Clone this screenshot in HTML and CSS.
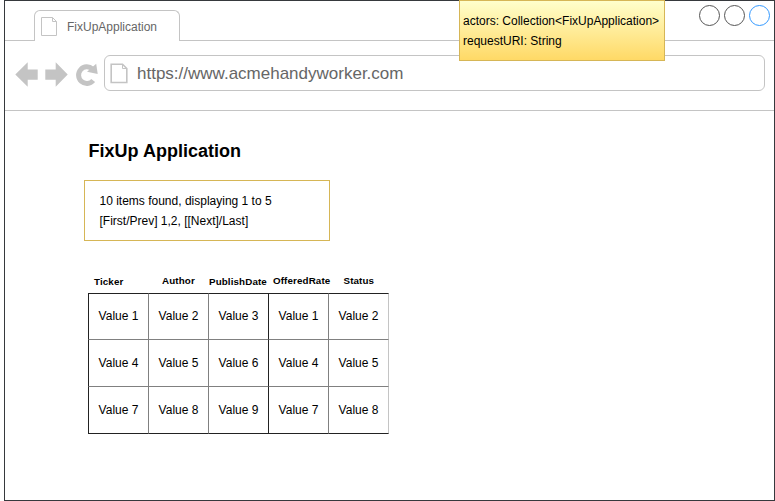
FILE: index.html
```html
<!DOCTYPE html>
<html lang="en">
<head>
<meta charset="utf-8">
<title>FixUpApplication</title>
<link rel="stylesheet" href="styles.css">
</head>
<body>
<div class="window">
  <header class="tabstrip">
    <div class="strip-start"></div>
    <div class="tab">
      <svg class="tab-icon" width="17" height="20" viewBox="0 0 17 20"><path d="M.5.5H11.500L15.500 4.500V18.500H.5ZM11.500.5V4.500H15.500" fill="none" stroke="#c4c4c4"/></svg>
      <span>FixUpApplication</span>
    </div>
    <div class="strip-end">
      <svg width="72" height="22" viewBox="0 0 72 22" fill="none"><circle cx="10.500" cy="11.500" r="10" stroke="#555"/><circle cx="35.500" cy="11.500" r="10" stroke="#555"/><circle cx="60.500" cy="11.500" r="10" stroke="#3399ff"/></svg>
    </div>
  </header>
  <div class="toolbar">
    <svg class="nav" width="84" height="26" viewBox="0 0 84 26"><g fill="#c4c4c4"><path d="M.3 12.500 12.700.2V7.500H22.700V17.700H12.700V24.700Z"/><path d="M52.700 12.500 40.700.2V7.500H30.300V17.700H40.700V24.700Z"/></g><path d="M78.200 18.500A8.300 8.300 0 1 1 77.500 7" fill="none" stroke="#c4c4c4" stroke-width="5"/><path d="M81.200 1.700 82.700 12 72 9.700Z" fill="#c4c4c4"/></svg>
    <div class="address">
      <svg width="18" height="21" viewBox="0 0 18 21"><path d="M1.200 1.200H12.500L16.800 5.500V19.500H1.200Z" fill="none" stroke="#c4c4c4" stroke-width="1.600"/><path d="M12.500 1.200V5.500H16.800" fill="none" stroke="#c4c4c4"/></svg>
      <span>https://www.acmehandyworker.com</span>
    </div>
  </div>
  <main class="page">
    <h1>FixUp Application</h1>
    <div class="pager">10 items found, displaying 1 to 5<br>[First/Prev] 1,2, [[Next]/Last]</div>
    <div class="heads">
      <span class="low ticker">Ticker</span><span class="author">Author</span><span class="low publish">PublishDate</span><span class="offered">OfferedRate</span><span class="status">Status</span>
    </div>
    <div class="values">
      <div>Value 1</div><div>Value 2</div><div>Value 3</div><div>Value 1</div><div>Value 2</div>
      <div>Value 4</div><div>Value 5</div><div>Value 6</div><div>Value 4</div><div>Value 5</div>
      <div>Value 7</div><div>Value 8</div><div>Value 9</div><div>Value 7</div><div>Value 8</div>
    </div>
  </main>
</div>
<aside class="note">actors: Collection&lt;FixUpApplication&gt;<br>requestURI: String</aside>
</body>
</html>
```
FILE: styles.css
```css
* { box-sizing: border-box; }
body {
  margin: 0;
  background: #fff;
  color: #000;
  font: 12px/20px "Liberation Sans", Arial, sans-serif;
  overflow: hidden;
}
svg { display: block; flex: none; }
.window {
  margin-left: 4px;
  width: 771px;
  height: 501px;
  border: 1px solid #36393d;
}
.tabstrip { display: flex; align-items: flex-end; height: 40px; }
.strip-start { width: 29px; border-bottom: 1px solid #c4c4c4; }
.tab {
  display: flex;
  width: 146px;
  height: 31px;
  padding: 6px 0 0 6px;
  border: 1px solid #c4c4c4;
  border-bottom: 0;
  border-radius: 6px 6px 0 0;
  color: #666;
}
.tab span { margin-left: 9px; line-height: 20px; }
.strip-end {
  flex: 1;
  display: flex;
  justify-content: flex-end;
  height: 40px;
  padding: 3px 3px 0 0;
  border-bottom: 1px solid #c4c4c4;
}
.toolbar {
  display: flex;
  height: 70px;
  padding: 14px 9px 0 10px;
  border-bottom: 1px solid #c4c4c4;
}
.nav { margin: 7px 5px 0 0; }
.address {
  display: flex;
  flex: 1;
  height: 36px;
  padding: 7px 0 0 5px;
  border: 1px solid #c4c4c4;
  border-radius: 6px;
  color: #666;
  font-size: 17px;
}
.address span { margin-left: 9px; line-height: 22px; }
.page { padding: 28px 0 0 79px; }
h1 { margin: 0 0 0 4.6px; font-size: 18px; line-height: 24px; }
.pager {
  width: 246px;
  height: 61px;
  margin-top: 17px;
  padding: 10px 14.5px;
  border: 1px solid #d6b656;
}
.heads {
  display: grid;
  grid-template-columns: repeat(5, 60px);
  height: 20px;
  margin: 30px 0 0 4px;
  font-size: 9.8px;
  font-weight: bold;
  letter-spacing: .12px;
  white-space: nowrap;
}
.heads .low { padding-top: 1px; }
.heads .ticker { padding-left: 6px; }
.heads .author { padding-left: 14px; }
.heads .publish { padding-left: 1px; }
.heads .offered { padding-left: 5px; }
.heads .status { padding-left: 15.5px; }
.values {
  display: grid;
  grid-template-columns: repeat(4, 60px) 61px;
  grid-template-rows: 46px 47px 48px;
  margin: 2px 0 0 4px;
}
.values div {
  padding-top: 12px;
  padding-left: 9.6px;
  border-top: 1px solid #808080;
  border-left: 1px solid #808080;
  white-space: nowrap;
}
.values div:nth-child(-n+5) { border-top-color: #222; }
.values div:nth-child(n+6) { padding-top: 13px; }
.values div:nth-child(n+11) { border-bottom: 1px solid #222; }
.values div:nth-child(5n+1), .values div:nth-child(5n+4) { border-left-color: #222; }
.values div:nth-child(5n) { border-right: 1px solid #c4c4c4; }
.note {
  position: absolute;
  left: 459px;
  top: 0;
  width: 206px;
  height: 61px;
  padding: 10px 3px;
  border: 1px solid #d6b656;
  background: linear-gradient(#ffffcc, #ffd966);
  white-space: nowrap;
}
```
